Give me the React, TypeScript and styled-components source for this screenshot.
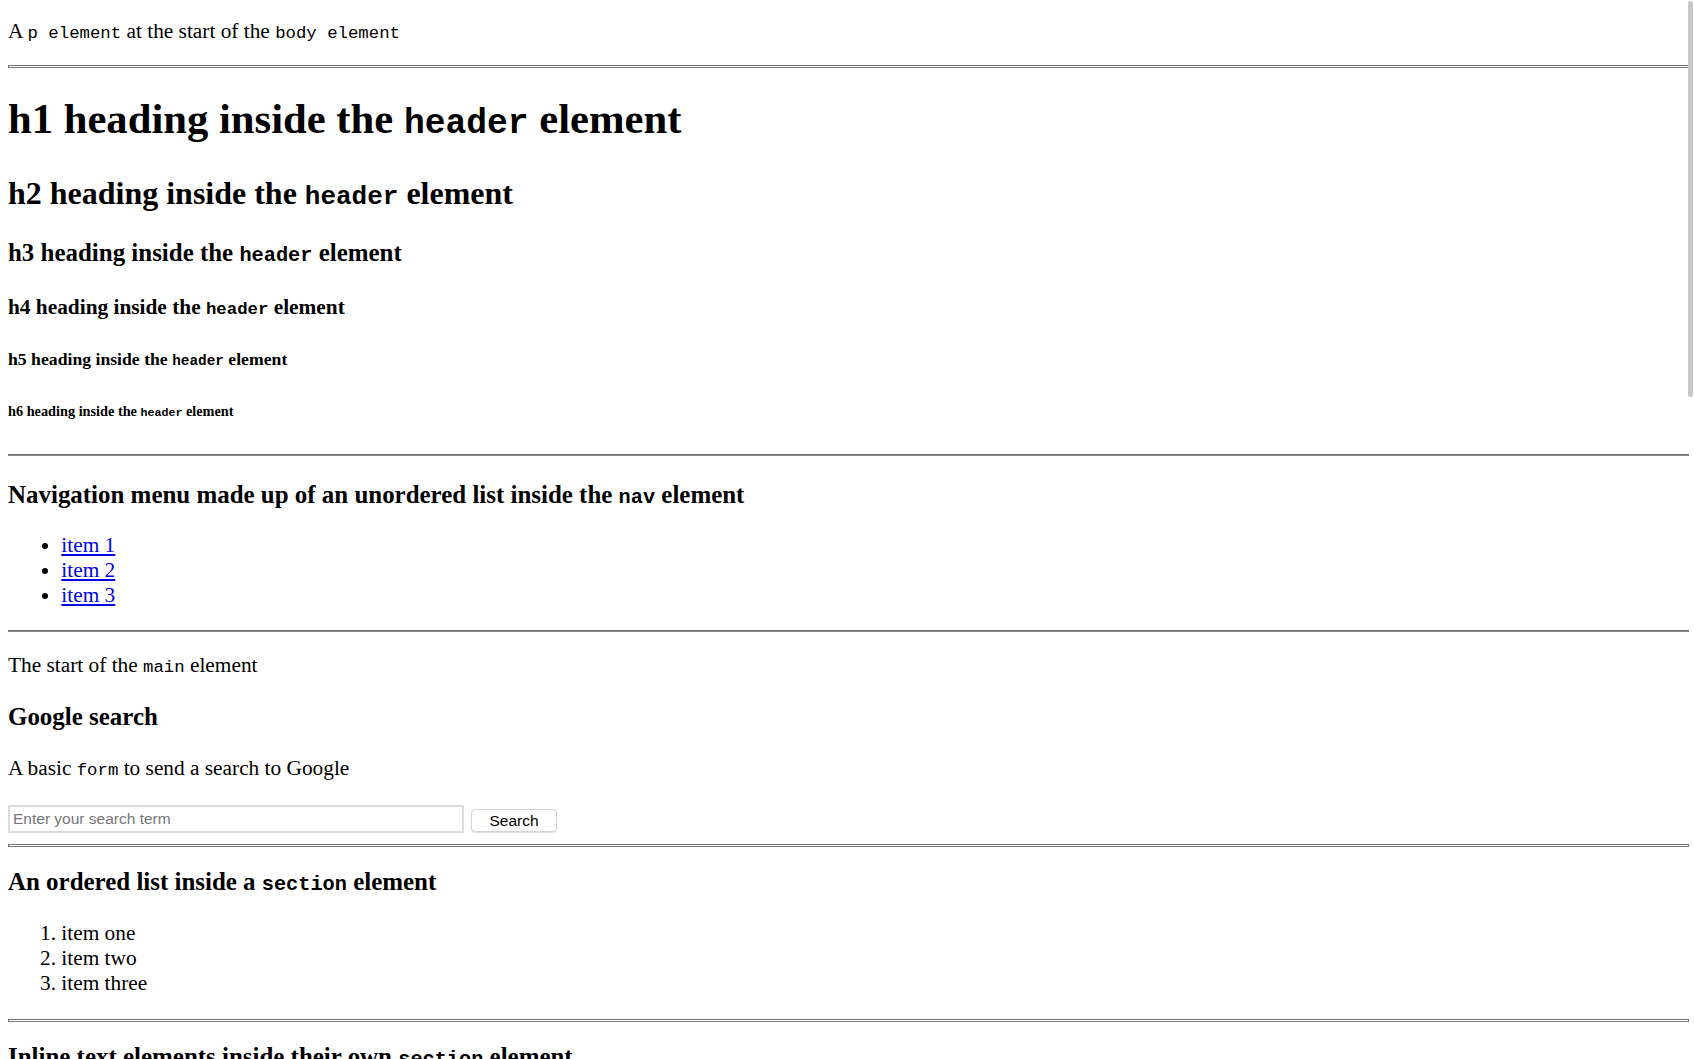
import styled, { createGlobalStyle } from 'styled-components';

const GlobalStyle = createGlobalStyle`
  html {
    scrollbar-width: none;
  }
  html::-webkit-scrollbar {
    display: none;
  }
  body {
    margin: 0 5px 8px 8px;
    background: #ffffff;
    color: #000000;
    font-family: 'Liberation Serif', 'Times New Roman', serif;
    font-size: 21.333px;
  }
`;

const Para = styled.p<{ $first?: boolean }>`
  margin: ${({ $first }) => ($first ? '19px' : '1em')} 0 1em;
`;

const Code = styled.code`
  font-family: 'Liberation Mono', 'Courier New', monospace;
  font-size: 0.8125em;
`;

const Rule = styled.hr<{ $double?: boolean }>`
  display: block;
  margin: 0.5em 0 ${({ $double }) => ($double ? '-4px' : '0.5em')};
  height: ${({ $double }) => ($double ? '1px' : '0')};
  border: 1px solid #6f6f6f;
  border-bottom-color: ${({ $double }) => ($double ? '#7a7a7a' : '#8a8a8a')};
  background: #ffffff;
`;

// font size (em), margin (em), extra top / bottom (px)
const sizes: Record<number, [number, number, number, number]> = {
  1: [2, 0.67, 1, 4],
  2: [1.5, 0.83, 0, 0],
  3: [1.17, 1, 0, 0],
  4: [1, 1.33, 0, 0],
  5: [0.83, 1.67, -1, 0],
  6: [0.67, 2.33, 0, 0],
};

const HeadingBase = styled.h1<{ $level: number }>`
  font-weight: bold;
  font-size: ${({ $level }) => sizes[$level][0]}em;
  margin: ${({ $level }) => `calc(${sizes[$level][1]}em + ${sizes[$level][2]}px)`} 0
    ${({ $level }) => `calc(${sizes[$level][1]}em + ${sizes[$level][3]}px)`};
`;

const Heading = ({ level, children }: { level: number; children: React.ReactNode }) => (
  <HeadingBase as={`h${level}` as any} $level={level}>
    {children}
  </HeadingBase>
);

const List = styled.ul`
  margin: 1em 0;
  padding-left: 53.33px;
  list-style: disc;
`;

const Numbered = styled.ol`
  margin: 1em 0 calc(1em + 2px);
  padding-left: 53.33px;
`;

const NavLink = styled.a`
  color: #0000ee;
  text-decoration: underline;
`;

const SearchForm = styled.form`
  display: flex;
  align-items: flex-start;
  gap: 7px;
  height: 31px;
  padding-top: 3px;
  box-sizing: border-box;
`;

const SearchInput = styled.input`
  box-sizing: border-box;
  width: 456px;
  height: 28px;
  margin: 0;
  padding: 0 3px;
  border: 2px solid #dcdcdc;
  border-radius: 0;
  font-family: 'Liberation Sans', Arial, sans-serif;
  font-size: 15.5px;
  color: #000;
  outline: none;

  &::placeholder {
    color: #767676;
  }
`;

const SearchButton = styled.button`
  box-sizing: border-box;
  width: 86px;
  height: 23px;
  margin-top: 4px;
  padding: 0;
  border: 1px solid #d3d3d3;
  border-radius: 4px;
  background: #ffffff;
  box-shadow: 0 1px 1px rgba(0, 0, 0, 0.12);
  font-family: 'Liberation Sans', Arial, sans-serif;
  font-size: 15.5px;
  color: #000;
`;

const ScrollThumb = styled.div`
  position: fixed;
  top: 1px;
  right: 1px;
  width: 5px;
  height: 396px;
  border-radius: 3px;
  background: #c8c8c8;
`;

export default function App() {
  return (
    <>
      <GlobalStyle />
      <Para $first>
        A <Code>p element</Code> at the start of the <Code>body element</Code>
      </Para>
      <Rule $double />
      <header>
        <Heading level={1}>
          h1 heading inside the <Code>header</Code> element
        </Heading>
        <Heading level={2}>
          h2 heading inside the <Code>header</Code> element
        </Heading>
        <Heading level={3}>
          h3 heading inside the <Code>header</Code> element
        </Heading>
        <Heading level={4}>
          h4 heading inside the <Code>header</Code> element
        </Heading>
        <Heading level={5}>
          h5 heading inside the <Code>header</Code> element
        </Heading>
        <Heading level={6}>
          h6 heading inside the <Code>header</Code> element
        </Heading>
      </header>
      <Rule />
      <nav>
        <Heading level={3}>
          Navigation menu made up of an unordered list inside the <Code>nav</Code> element
        </Heading>
        <List>
          <li>
            <NavLink href="#">item 1</NavLink>
          </li>
          <li>
            <NavLink href="#">item 2</NavLink>
          </li>
          <li>
            <NavLink href="#">item 3</NavLink>
          </li>
        </List>
      </nav>
      <Rule />
      <main>
        <Para>
          The start of the <Code>main</Code> element
        </Para>
        <Heading level={3}>Google search</Heading>
        <Para>
          A basic <Code>form</Code> to send a search to Google
        </Para>
        <SearchForm onSubmit={(e) => e.preventDefault()}>
          <SearchInput type="text" placeholder="Enter your search term" />
          <SearchButton type="submit">Search</SearchButton>
        </SearchForm>
        <Rule $double />
        <section>
          <Heading level={3}>
            An ordered list inside a <Code>section</Code> element
          </Heading>
          <Numbered>
            <li>item one</li>
            <li>item two</li>
            <li>item three</li>
          </Numbered>
        </section>
        <Rule $double />
        <section>
          <Heading level={3}>
            Inline text elements inside their own <Code>section</Code> element
          </Heading>
          <Para>
            Some <strong>strong</strong> text, some <em>emphasised</em> text and some <Code>code</Code>.
          </Para>
        </section>
      </main>
      <ScrollThumb />
    </>
  );
}
